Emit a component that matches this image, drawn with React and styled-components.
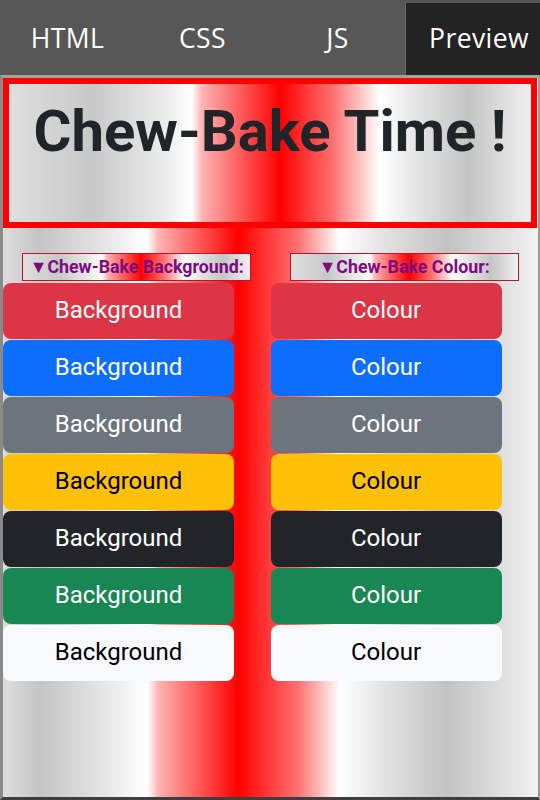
import React from "react";
import styled, { createGlobalStyle } from "styled-components";

const GlobalStyle = createGlobalStyle`
    html, body {
        margin: 0;
        padding: 0;
        background: #555;
    }
    * {
        box-sizing: border-box;
    }
`;

const metal = `linear-gradient(to right, #dedede 0%, #c4c4c4 7%, #e6e6e6 19%, #ffffff 27%, #ffb3b3 29%, #ff0000 44%, #ff7070 55%, #ffffff 63%, #e0e0e0 72%, #c2c2c2 83%, #f2f2f2 100%)`;
const metalCenter = `linear-gradient(to right, #dedede 0%, #c8c8c8 16%, #ececec 30%, #ffffff 35%, #ffb3b3 37%, #ff0000 52%, #ff7070 62%, #ffffff 71%, #dedede 80%, #c4c4c4 88%, #f0f0f0 100%)`;

const Page = styled.div`
    width: 540px;
    height: 800px;
    display: flex;
    flex-direction: column;
    background: #555;
`;

const TabBar = styled.nav`
    height: 75px;
    display: grid;
    grid-template-columns: repeat(4, 1fr);
    background: #575757;
    padding-top: 3px;
`;

const Tab = styled.div`
    display: flex;
    align-items: center;
    justify-content: center;
    color: #fff;
    font-family: "Open Sans", "DejaVu Sans", sans-serif;
    font-size: 26.5px;
    letter-spacing: 0.4px;
    background: ${(p) => (p.$active ? "#232323" : "transparent")};
    border-left: ${(p) => (p.$active ? "1px solid #6a6a6a" : "none")};
    padding-bottom: 3px;
    padding-left: ${(p) => (p.$active ? "12px" : "0")};
`;

const Frame = styled.main`
    flex: 1;
    border-top: 3px solid #a2a49a;
    border-left: 3px solid #8a8a8a;
    border-right: 2px solid #9a9a9a;
    border-bottom: 3px solid #3e3e3e;
    background: ${metal};
    font-family: Roboto, "Liberation Sans", sans-serif;
`;

const TitleBox = styled.header`
    height: 150px;
    border: 6px solid #ff0000;
    background: ${metalCenter};
    margin-right: 1px;
`;

const Title = styled.h1`
    margin: 0;
    padding-top: 11px;
    text-align: center;
    font-size: 58px;
    font-weight: 700;
    color: #212529;
    line-height: 72px;
`;

const Columns = styled.section`
    display: grid;
    grid-template-columns: 1fr 1fr;
    margin-top: 25px;
`;

const Column = styled.div`
    display: flex;
    flex-direction: column;
`;

const Summary = styled.div`
    align-self: center;
    width: 229px;
    height: 28px;
    border: 1px solid #c0102a;
    background: ${metalCenter};
    color: #7d0a80;
    font-weight: 700;
    font-size: 17.8px;
    white-space: nowrap;
    display: flex;
    align-items: center;
    justify-content: center;
    margin-bottom: 2px;
`;

const ButtonList = styled.div`
    display: flex;
    flex-direction: column;
    gap: 1px;
`;

const ColourButton = styled.button`
    width: 231px;
    height: 56px;
    border: none;
    border-radius: 8px;
    background: ${(p) => p.$bg};
    color: ${(p) => p.$fg};
    font-family: Roboto, "Liberation Sans", sans-serif;
    font-size: 24px;
    padding: 0 0 2px;
`;

const swatches = [
    { bg: "#dc3545", fg: "#fff" },
    { bg: "#0d6efd", fg: "#fff" },
    { bg: "#6c757d", fg: "#fff" },
    { bg: "#ffc107", fg: "#000" },
    { bg: "#212529", fg: "#fff" },
    { bg: "#198754", fg: "#fff" },
    { bg: "#f8f9fa", fg: "#000" },
];

const App = () => {
    return (
        <>
            <GlobalStyle />
            <Page>
                <TabBar>
                    <Tab>HTML</Tab>
                    <Tab>CSS</Tab>
                    <Tab>JS</Tab>
                    <Tab $active>Preview</Tab>
                </TabBar>
                <Frame>
                    <TitleBox>
                        <Title>Chew-Bake Time !</Title>
                    </TitleBox>
                    <Columns>
                        <Column>
                            <Summary>▼Chew-Bake Background:</Summary>
                            <ButtonList>
                                {swatches.map((s) => (
                                    <ColourButton key={s.bg} $bg={s.bg} $fg={s.fg}>Background</ColourButton>
                                ))}
                            </ButtonList>
                        </Column>
                        <Column>
                            <Summary>▼Chew-Bake Colour:</Summary>
                            <ButtonList>
                                {swatches.map((s) => (
                                    <ColourButton key={s.bg} $bg={s.bg} $fg={s.fg}>Colour</ColourButton>
                                ))}
                            </ButtonList>
                        </Column>
                    </Columns>
                </Frame>
            </Page>
        </>
    );
};

export default App;
